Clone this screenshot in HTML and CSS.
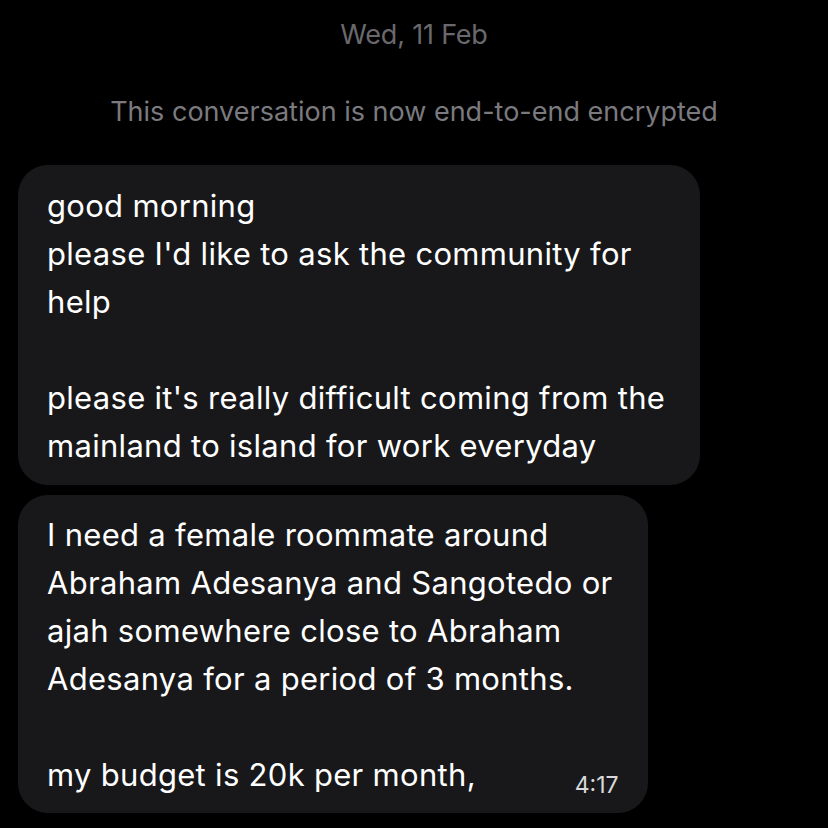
FILE: index.html
```html
<!DOCTYPE html>
<html lang="en">
<head>
    <meta charset="UTF-8">
    <meta name="viewport" content="width=device-width, initial-scale=1.0">
    <title>Chat</title>
    <link rel="stylesheet" href="styles.css">
</head>
<body>
    <div class="chat">
        <div class="date-label">Wed, 11 Feb</div>
        <div class="system-note">This conversation is now end-to-end encrypted</div>

        <div class="bubble">
            <p class="bubble-text">good morning<br>please I'd like to ask the community for<br>help<br><br>please it's really difficult coming from the<br>mainland to island for work everyday</p>
        </div>

        <div class="bubble bubble-last">
            <p class="bubble-text">I need a female roommate around<br>Abraham Adesanya and Sangotedo or<br>ajah somewhere close to Abraham<br>Adesanya for a period of 3 months.<br><br>my budget is 20k per month,</p>
            <span class="time">4:17</span>
        </div>
    </div>
</body>
</html>
```

FILE: styles.css
```css
body {
    margin: 0;
    background-color: #000;
    font-family: Inter, "Noto Sans", sans-serif;
}
.chat {
    padding: 18px 18px 0;
    display: flex;
    flex-direction: column;
    align-items: flex-start;
    gap: 10px;
}
.date-label {
    align-self: center;
    color: #69696d;
    font-size: 27px;
    letter-spacing: -0.2px;
    line-height: 34px;
}
.system-note {
    align-self: center;
    color: #7a7a7f;
    font-size: 27px;
    line-height: 34px;
    margin-top: 33px;
    margin-bottom: 26px;
}
.bubble {
    background-color: #18181a;
    border-radius: 30px;
    padding: 17px 35px 15px 29px;
    width: fit-content;
    position: relative;
}
.bubble-text {
    margin: 0;
    color: #fff;
    font-size: 31px;
    line-height: 48px;
    letter-spacing: 0.3px;
}
.bubble-last {
    padding-top: 16px;
    padding-bottom: 14px;
}
.time {
    position: absolute;
    right: 29px;
    bottom: 14px;
    color: #d8d8dc;
    font-size: 23px;
}
```
